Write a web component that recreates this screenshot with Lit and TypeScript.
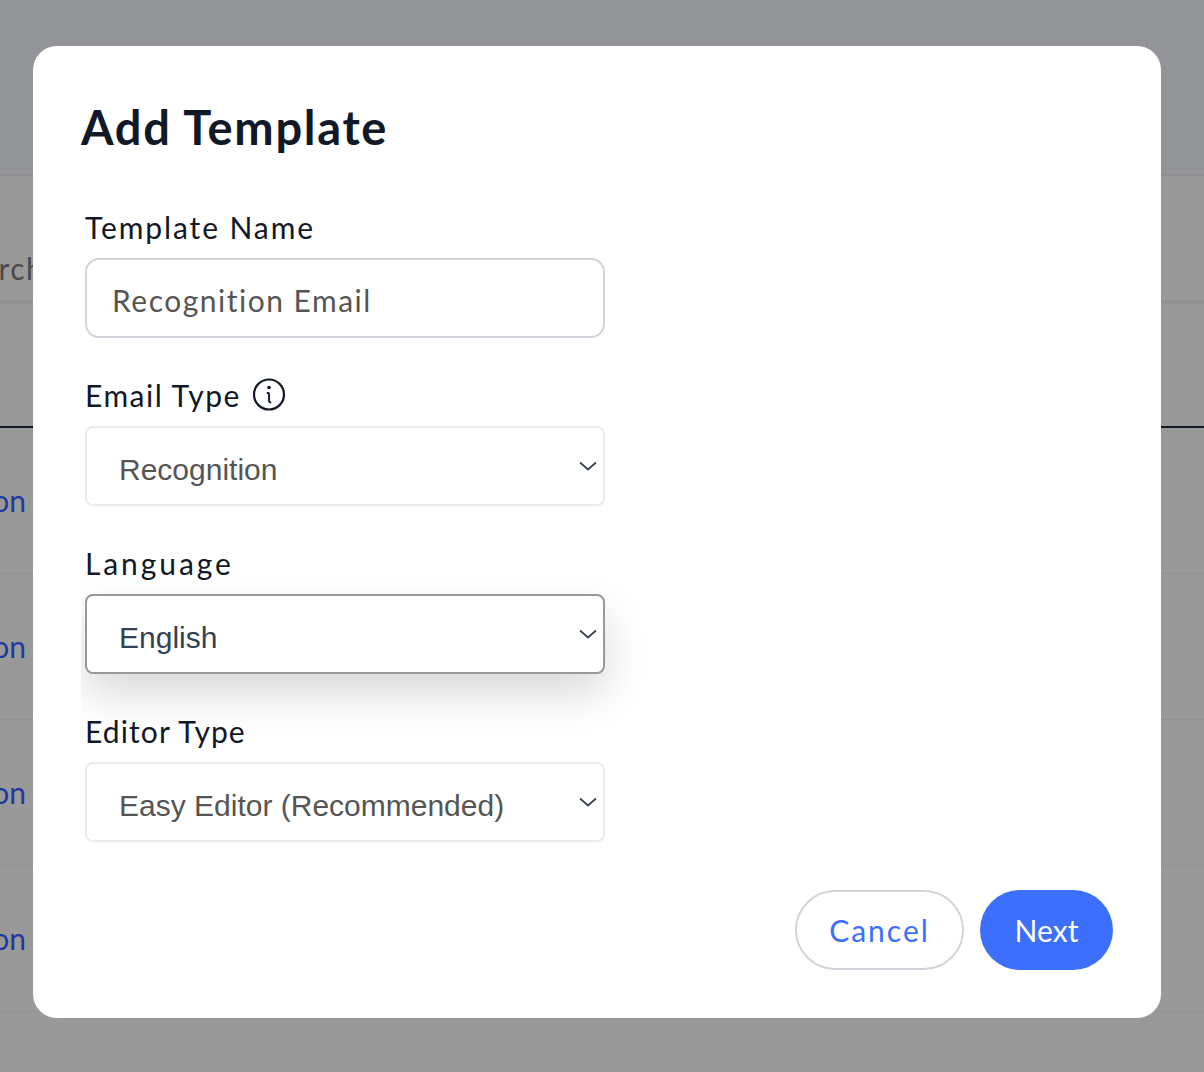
import { LitElement, html, css } from 'lit';
import { customElement } from 'lit/decorators.js';

const chevron = html`<svg class="chevron" width="18" height="10" viewBox="0 0 18 10" fill="none">
  <path d="M1 1.5 L9 8.5 L17 1.5" stroke="#374151" stroke-width="1.8" />
</svg>`;

@customElement('app-root')
export class AppRoot extends LitElement {
  static styles = css`
    :host {
      display: block;
      position: relative;
      width: 1204px;
      height: 1072px;
      overflow: hidden;
      background: #999999;
      font-family: 'Lato', sans-serif;
      font-variant-ligatures: none;
    }

    .top {
      height: 174px;
      background: #939498;
      border-bottom: 2px solid #8f8f8f;
    }

    .search {
      height: 64px;
      padding-top: 60px;
      border-bottom: 4px solid #929292;
      display: flex;
      align-items: center;
      font-size: 30px;
      letter-spacing: 1.5px;
      color: #4a4a4a;
    }

    .search span {
      margin-left: -53px;
    }

    .thead {
      height: 122px;
      border-bottom: 2px solid #111827;
    }

    .row {
      height: 143px;
      padding-bottom: 2px;
      border-bottom: 1px solid #929292;
      display: flex;
      align-items: center;
      font-size: 30px;
      color: #1e3a9f;
    }

    .row span {
      width: 26px;
      display: flex;
      justify-content: flex-end;
      white-space: nowrap;
    }

    .modal {
      position: absolute;
      left: 33px;
      top: 46px;
      width: 1128px;
      height: 972px;
      box-sizing: border-box;
      background: #fff;
      border-radius: 24px;
      padding: 47px 48px 48px;
      display: flex;
      flex-direction: column;
    }

    h1 {
      margin: 0;
      font-size: 47px;
      line-height: 68px;
      font-weight: 700;
      letter-spacing: 1.7px;
      color: #111827;
    }

    form {
      margin: 41px 0 0;
      padding: 0 48px 48px 4px;
      width: 600px;
      box-sizing: border-box;
      overflow: hidden;
      display: flex;
      flex-direction: column;
    }

    .field {
      width: 520px;
      height: 168px;
      flex: none;
    }

    .field:last-child {
      height: 136px;
    }

    .lbl {
      height: 50px;
      margin-bottom: 6px;
      display: flex;
      align-items: center;
      gap: 11px;
      font-size: 30px;
      line-height: 50px;
      letter-spacing: 1.5px;
      color: #111827;
    }

    .lbl.name {
      letter-spacing: 1.9px;
    }

    .lbl.lang {
      letter-spacing: 2.9px;
    }

    .lbl.editor {
      letter-spacing: 1.1px;
    }

    input,
    select {
      display: block;
      width: 520px;
      height: 80px;
      box-sizing: border-box;
      margin: 0;
      background: #fff;
      outline: none;
      appearance: none;
    }

    input {
      border: 2px solid #d1d5db;
      border-radius: 14px;
      padding: 3px 25px 0;
      font: 400 30px 'Lato', sans-serif;
      letter-spacing: 1.5px;
      font-variant-ligatures: none;
      color: #555555;
    }

    select {
      border: 2px solid #ebebeb;
      border-radius: 8px;
      padding: 6px 32px 0;
      font: 400 30px 'Liberation Sans', sans-serif;
      color: #555555;
    }

    .box {
      position: relative;
      height: 80px;
    }

    .chevron {
      position: absolute;
      right: 8px;
      top: 35px;
      pointer-events: none;
    }

    .focus select {
      border-color: #999999;
      color: #334155;
      box-shadow: 0 20px 44px rgba(0, 0, 0, 0.15);
    }

    .actions {
      display: flex;
      justify-content: flex-end;
      gap: 16px;
      margin-top: auto;
    }

    button {
      height: 80px;
      border-radius: 40px;
      font: 400 30px 'Lato', sans-serif;
      box-sizing: border-box;
    }

    .cancel {
      width: 169px;
      background: #fff;
      border: 2px solid #d1d5db;
      color: #3b6ffc;
      letter-spacing: 2px;
    }

    .next {
      width: 133px;
      background: #3b6ffc;
      border: none;
      color: #fff;
    }
  `;

  render() {
    return html`
      <div class="top"></div>
      <div class="search"><span>Search</span></div>
      <div class="thead"></div>
      ${[0, 1, 2, 3].map(() => html`<div class="row"><span>Recognition</span></div>`)}

      <div class="modal">
        <h1>Add Template</h1>
        <form>
          <div class="field">
            <div class="lbl name">Template Name</div>
            <input type="text" .value=${'Recognition Email'} />
          </div>
          <div class="field">
            <div class="lbl">
              Email Type
              <svg width="34" height="34" viewBox="0 0 34 34" fill="none">
                <circle cx="17" cy="16.5" r="15" stroke="#111827" stroke-width="2.2" />
                <circle cx="17" cy="9.5" r="1.8" fill="#111827" />
                <path d="M14.8 15 H16.2 Q17 15 17 16 V22.5 Q17 24.5 19.2 24.5" stroke="#111827" stroke-width="1.9" />
              </svg>
            </div>
            <div class="box">
              <select><option>Recognition</option></select>
              ${chevron}
            </div>
          </div>
          <div class="field focus">
            <div class="lbl lang">Language</div>
            <div class="box">
              <select><option>English</option></select>
              ${chevron}
            </div>
          </div>
          <div class="field">
            <div class="lbl editor">Editor Type</div>
            <div class="box">
              <select><option>Easy Editor (Recommended)</option></select>
              ${chevron}
            </div>
          </div>
        </form>
        <div class="actions">
          <button class="cancel">Cancel</button>
          <button class="next">Next</button>
        </div>
      </div>
    `;
  }
}
